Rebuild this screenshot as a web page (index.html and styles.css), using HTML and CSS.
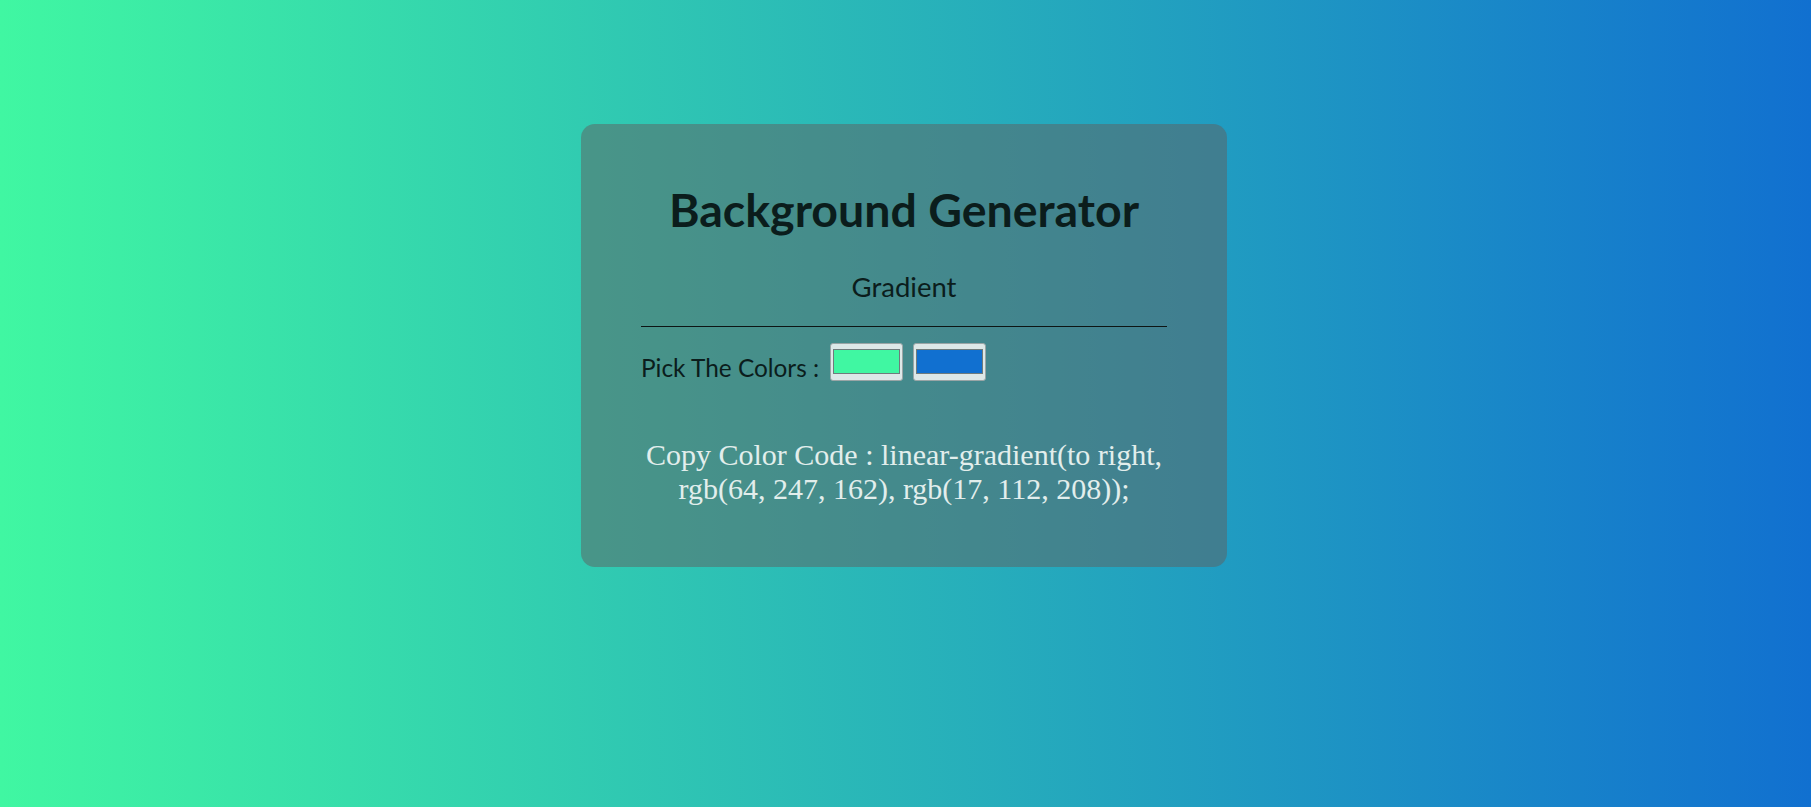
FILE: index.html
```html
<!DOCTYPE html>
<html lang="en">
<head>
<meta charset="utf-8">
<title>Background Generator</title>
<link rel="stylesheet" href="styles.css">
</head>
<body>
<main class="card">
  <h1 class="title">Background Generator</h1>
  <h3 class="subtitle">Gradient</h3>
  <hr class="rule">
  <div class="picker">
    <span class="picker-label">Pick The Colors :</span>
    <input class="swatch" type="color" value="#40f7a2">
    <input class="swatch" type="color" value="#1170d0">
  </div>
  <p class="code">Copy Color Code : linear-gradient(to right, rgb(64, 247, 162), rgb(17, 112, 208));</p>
</main>
</body>
</html>
```
FILE: styles.css
```css
html, body {
  height: 100%;
}
body {
  margin: 0;
  padding-right: 3px;
  background: linear-gradient(to right, rgb(64, 247, 162), rgb(17, 112, 208));
  font-family: Lato, "Open Sans", sans-serif;
  overflow: hidden;
}
.card {
  box-sizing: border-box;
  width: 646px;
  margin: 124px auto 0;
  padding: 58px 60px 61px;
  border-radius: 14px;
  background: rgba(95, 95, 95, 0.5);
  color: #0b1d1c;
  text-align: center;
}
.title {
  margin: 0;
  font-size: 46.5px;
  line-height: 54px;
  font-weight: 700;
}
.subtitle {
  margin: 36px 0 0;
  font-size: 27.5px;
  line-height: 30px;
  font-weight: 400;
}
.rule {
  margin: 24px 0 16px;
  border: 0;
  border-top: 1px solid #0d1514;
  height: 0;
}
.picker {
  display: flex;
  align-items: flex-end;
  gap: 10px;
}
.picker-label {
  font-size: 24.4px;
  line-height: 27px;
  margin-right: 1px;
}
.swatch {
  -webkit-appearance: none;
  appearance: none;
  box-sizing: border-box;
  width: 73px;
  height: 38px;
  margin: 0;
  padding: 5px 2px 6px;
  border: 1px solid #9aa5a6;
  border-radius: 3px;
  background: #dde8e8;
  cursor: pointer;
}
.swatch::-webkit-color-swatch-wrapper {
  padding: 0;
}
.swatch::-webkit-color-swatch {
  border: 1px solid #6f7b7c;
  border-radius: 0;
}
.code {
  margin: 57px 0 0;
  font-family: "Liberation Serif", "Times New Roman", serif;
  font-size: 30px;
  line-height: 34px;
  color: #e2eeec;
}
```
